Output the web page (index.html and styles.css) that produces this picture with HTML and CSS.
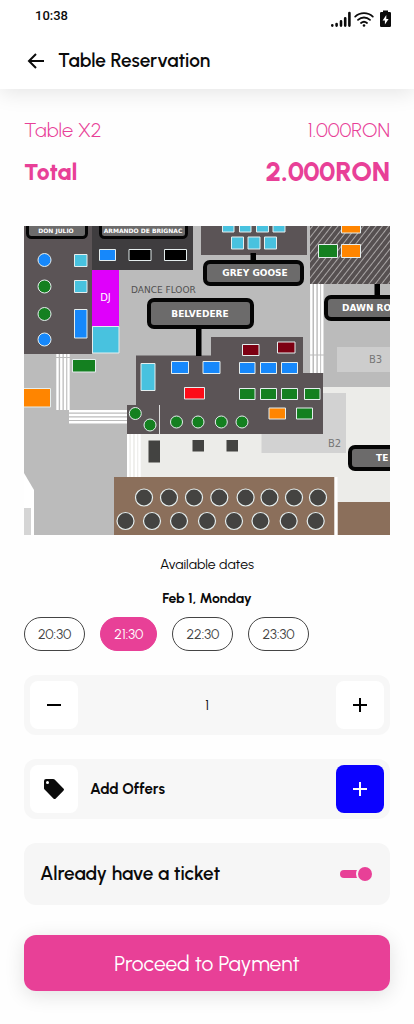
FILE: index.html
```html
<!DOCTYPE html>
<html lang="en">
<head>
<meta charset="utf-8">
<meta name="viewport" content="width=device-width, initial-scale=1">
<title>Table Reservation</title>
<link rel="stylesheet" href="styles.css">
</head>
<body>
<header class="header">
  <div class="status">
    <span class="time">10:38</span>
    <svg class="status-icons" width="62" height="18" viewBox="0 0 62 18" aria-hidden="true">
      <g stroke="#0b0b0b" stroke-width="2.6" stroke-linecap="round" fill="none">
        <path d="M2.3 15.6v-.4M6.6 15.6v-1.6M11 15.6v-4.2M15.2 15.6V8.200M19.400 15.600V3"/>
        <path stroke-width="1.8" d="M25.200 6.600c5-4.600 12.600-4.600 17.600 0M28 9.900c3.500-3.200 8.500-3.200 12 0M31 13c1.900-1.600 4.100-1.600 6 0"/>
      </g>
      <circle cx="34" cy="15.500" r="1.300" fill="#0b0b0b"/>
      <path fill="#0b0b0b" d="M53 .5h5v1.500h1.800q1.200 0 1.200 1.200v12.600q0 1.200-1.200 1.200h-8.600q-1.200 0-1.200-1.200V3.200q0-1.200 1.200-1.200H53z"/>
      <path fill="#fff" d="M56.300 5 52.600 10.500h2.300v4l3.700-5.600h-2.300z"/>
    </svg>
  </div>
  <div class="appbar">
    <button class="back" type="button" aria-label="Back">
      <svg width="18" height="18" viewBox="0 0 18 18" fill="none" stroke="#0b0b0b" stroke-width="2"><path d="M17 9H2.500M9 2 2 9l7 7"/></svg>
    </button>
    <h1 class="title">Table Reservation</h1>
  </div>
</header>

<main class="content">
  <dl class="summary">
    <div class="row"><dt>Table X2</dt><dd>1.000RON</dd></div>
    <div class="row total"><dt>Total</dt><dd>2.000RON</dd></div>
  </dl>

  <svg class="map" viewBox="24 226 366 309" role="img" aria-label="Venue floor plan">
    <defs>
      <pattern id="hatch" width="5" height="8" patternUnits="userSpaceOnUse" patternTransform="rotate(38)">
        <rect width="5" height="8" fill="#565051"/><rect width="1" height="8" fill="#aaa6a6"/>
      </pattern>
    </defs>
    <rect x="24" y="226" width="366" height="309" fill="#bbb"/>
    <path fill="#ecece9" d="M127 434H323V387H390V535H334V477H127z"/>
    <path fill="#d2d2d2" d="M261.500 393H346V453H261.500z"/>
    <path fill="#fff" d="M24 473 34 490V535H24z"/>
    <path fill="#d5d5d5" d="M24 508h7v27h-7z"/>
    <path fill="#cdcdcd" d="M337 347h53v25h-53z"/>

    <!-- stairs -->
    <g stroke="#fff" stroke-width="2.400">
      <path d="M57.500 354v56M61.300 354v56M65 354v56M68.500 354v56M69 411.200h58M69 415h58M69 418.800h58M69 422.300h58"/>
      <path d="M128.200 434v43M132 434v43M136 434v43M139.500 434v43"/>
      <path d="M311.300 284v89M315.200 284v89M319 284v89M322.300 284v89"/>
    </g>
    <path stroke="#bbb" d="M56 357.500h14M310 355h14"/>

    <!-- seating blocks -->
    <path fill="#5b5456" d="M24 226h68v128H24zM201 226h106v29H201zM136 355.500H211V337H303V373H323V434H127V405H136z"/>
    <path fill="#3f3d3f" d="M92 226h101v44H92z"/>
    <path fill="url(#hatch)" d="M310 226h80v58h-80z"/>
    <path stroke="#ddd" d="M159.500 405v29"/>
    <path fill="#8b6f5b" d="M114 477h220.500v58H114zM337.500 502H390v33h-52.500z"/>
    <path fill="#fff" d="M334.500 477h3v58h-3z"/>

    <g stroke="#e5eeee" stroke-width="1">
      <g fill="#48c2df">
        <path d="M74.500 254.500h12.500v12H74.500zM74.500 280.500h12.500v12H74.500zM92.500 326.500h26.500v26.500H92.500zM141 363.500h14v27h-14z"/>
        <path d="M222.500 220h11.500v12h-11.500zM239.500 220h11.500v12h-11.500zM256.500 220h12v12h-12zM273 220h12v12h-12zM231.500 237h12v12h-12zM248 237h12v12h-12zM264.500 237h12v12h-12z"/>
      </g>
      <g fill="#1688fb">
        <path d="M74.500 309.500h12.500v28.500H74.500zM99.500 249.500h16v11h-16zM171.500 361.500h17v12h-17zM203 361.500h17v12h-17zM239.500 362.500h15.500v11h-15.500zM260.500 362.500h16v11h-16zM281.500 362.500h16v11h-16z"/>
        <circle cx="44.500" cy="260" r="6.500"/><circle cx="44.500" cy="339.500" r="6.500"/>
      </g>
      <path fill="#000" d="M129 249.500h22v11h-22zM164.500 249.500h22v11h-22z"/>
      <g fill="#148020">
        <path d="M72.500 359.500h23v12.500h-23zM318.500 244.500h19v13h-19zM239.500 388.500h15.500v11h-15.500zM260.500 388.500h16v11h-16zM281.500 388.500h16v11h-16zM304.500 388.500h15.500v11h-15.500zM296.500 408h16v11h-16z"/>
        <circle cx="44.500" cy="286.500" r="6.500"/><circle cx="44.500" cy="314" r="6.500"/>
        <circle cx="135.300" cy="413.500" r="6"/><circle cx="150" cy="425" r="6"/><circle cx="176.500" cy="422" r="6"/><circle cx="198" cy="422" r="6"/><circle cx="221.300" cy="422" r="6"/><circle cx="242" cy="422" r="6"/>
      </g>
      <path fill="#ff8500" d="M20 388.500h30.500v18.500H20zM341.500 220h19v13h-19zM341.500 244.500h19v13h-19zM269 408h16.500v11h-16.500z"/>
      <path fill="#7d0012" d="M242.500 344.500h16.500v11h-16.500zM277.500 342h17.500v11h-17.500z"/>
      <path fill="#fd0c18" d="M184.500 387.500h20v11.500h-20z"/>
      <g fill="#444341" stroke-width="1.200">
        <circle cx="144" cy="497.500" r="8.500"/><circle cx="169" cy="497.500" r="8.500"/><circle cx="194" cy="497.500" r="8.500"/><circle cx="219.300" cy="497.500" r="8.500"/><circle cx="245.600" cy="497.500" r="8.500"/><circle cx="269.500" cy="497.500" r="8.500"/><circle cx="294" cy="497.500" r="8.500"/><circle cx="318" cy="497.500" r="8.500"/>
        <circle cx="125.500" cy="521" r="8.500"/><circle cx="152" cy="521" r="8.500"/><circle cx="179" cy="521" r="8.500"/><circle cx="207" cy="521" r="8.500"/><circle cx="234" cy="521" r="8.500"/><circle cx="260.500" cy="521" r="8.500"/><circle cx="288.700" cy="521" r="8.500"/><circle cx="315.700" cy="521" r="8.500"/>
      </g>
    </g>
    <path fill="#434341" d="M148.500 440.500h11.500v22h-11.500zM192.500 440h11.500v11.500h-11.500zM226.500 440h11.500v11.500h-11.500z"/>
    <path fill="#df00fb" d="M92 270h27v56H92z"/>

    <!-- zone signs -->
    <path fill="#000" d="M250.500 253h5.500v9h-5.500zM196 326h5.500v30H196zM374.500 284h5.500v13h-5.500z"/>
    <g fill="#6c6b6b" stroke="#050505" stroke-width="4">
      <rect x="205" y="262" width="97" height="22" rx="5"/>
      <rect x="149" y="300" width="103" height="27" rx="5"/>
      <rect x="326" y="297" width="90" height="22" rx="5"/>
      <rect x="350" y="447" width="90" height="22" rx="5"/>
      <rect x="27.500" y="215" width="59" height="22.500" rx="4" stroke-width="3"/>
      <rect x="100.500" y="215" width="86" height="22.500" rx="4" stroke-width="3"/>
    </g>
    <g class="sign">
      <text class="small" x="56" y="233" text-anchor="middle">DON JULIO</text>
      <text class="small" x="143" y="233" text-anchor="middle">ARMANDO DE BRIGNAC</text>
      <text x="255" y="276" text-anchor="middle">GREY GOOSE</text>
      <text x="200" y="317" text-anchor="middle">BELVEDERE</text>
      <text x="342" y="311">DAWN RO</text>
      <text x="376" y="461">TE</text>
    </g>
    <g class="zone">
      <text class="dj" x="105.500" y="301" text-anchor="middle">DJ</text>
      <text class="floor" x="131" y="293">DANCE FLOOR</text>
      <text x="369" y="363">B3</text>
      <text x="328" y="447">B2</text>
    </g>
  </svg>

  <section class="dates">
    <h2 class="dates-title">Available dates</h2>
    <p class="day">Feb 1, Monday</p>
    <div class="slots">
      <button class="slot" type="button">20:30</button>
      <button class="slot selected" type="button" aria-pressed="true">21:30</button>
      <button class="slot" type="button">22:30</button>
      <button class="slot" type="button">23:30</button>
    </div>
  </section>

  <div class="panel">
    <button class="square" type="button" aria-label="Fewer">
      <svg width="14" height="14" viewBox="0 0 14 14"><path fill="#000" d="M0 6h14v2H0z"/></svg>
    </button>
    <output class="count">1</output>
    <button class="square" type="button" aria-label="More">
      <svg width="14" height="14" viewBox="0 0 14 14"><path fill="#000" d="M0 6h6V0h2v6h6v2H8v6H6V8H0z"/></svg>
    </button>
  </div>

  <div class="panel">
    <span class="square">
      <svg width="20" height="20" viewBox="0 0 20 20" aria-hidden="true"><path fill="#0b0b0b" fill-rule="evenodd" d="M2 0h7.200q.8 0 1.400.6l8.800 8.800q1.200 1.200 0 2.400l-7.600 7.600q-1.200 1.200-2.400 0L.6 10.600Q0 10 0 9.200V2Q0 0 2 0zM3.500 2A1.500 1.500 0 1 0 3.500 5 1.500 1.500 0 1 0 3.500 2z"/></svg>
    </span>
    <span class="offers">Add Offers</span>
    <button class="square blue" type="button" aria-label="Add offer">
      <svg width="14" height="14" viewBox="0 0 14 14"><path fill="#fff" d="M0 6h6V0h2v6h6v2H8v6H6V8H0z"/></svg>
    </button>
  </div>

  <label class="ticket" for="ticket">
    <span>Already have a ticket</span>
    <input class="toggle" id="ticket" type="checkbox" role="switch" checked>
  </label>

  <button class="pay" type="button">Proceed to Payment</button>
</main>
</body>
</html>
```
FILE: styles.css
```css
* { box-sizing: border-box; }

body {
  margin: 0;
  background: #fefefe;
  color: #0b0b0b;
  font-family: Urbanist, Lato, "Liberation Sans", sans-serif;
}

h1, h2, p, dl, dd { margin: 0; }

button {
  border: 0;
  padding: 0;
  font: inherit;
  color: inherit;
  cursor: pointer;
}

.header {
  background: #fff;
  padding: 8px 22px 12px 24px;
  box-shadow: 0 4px 20px rgba(0, 0, 0, 0.1);
}

.status {
  display: flex;
  justify-content: space-between;
  height: 25px;
}

.time {
  padding-left: 11px;
  font: 500 13px/16px Roboto, sans-serif;
}

.status-icons { margin-top: 2px; }

.appbar {
  display: flex;
  align-items: center;
  gap: 10px;
  height: 44px;
  padding-top: 12px;
}

.back {
  display: flex;
  align-items: center;
  justify-content: center;
  width: 24px;
  height: 24px;
  background: none;
}

.title {
  font-size: 19px;
  font-weight: 600;
  line-height: 24px;
}

.content {
  display: flex;
  flex-direction: column;
  gap: 24px;
  padding: 27px 24px 32px;
}

.summary {
  display: flex;
  flex-direction: column;
  gap: 14px;
  color: #e84097;
}

.row {
  display: flex;
  justify-content: space-between;
  align-items: center;
  font-size: 20px;
  font-weight: 300;
  line-height: 28px;
}

.total {
  font-size: 23px;
  font-weight: 800;
}

.total dd { font-size: 27px; }

.map {
  display: block;
  width: 100%;
  height: auto;
  margin-top: 16px;
}

.sign { font: bold 9px "DejaVu Sans", sans-serif; fill: #fff; }
.sign .small { font-size: 6px; }
.zone { font: 10px "DejaVu Sans", sans-serif; fill: #777; }
.zone .floor { font-size: 9px; fill: #505050; }
.zone .dj { fill: #fff; }

.dates {
  text-align: center;
  margin-top: -3px;
}

.dates-title {
  font-size: 14px;
  font-weight: 400;
  line-height: 18px;
}

.day {
  margin: 16px 0 9px;
  font-size: 14px;
  font-weight: 700;
  line-height: 18px;
}

.slots {
  display: flex;
  gap: 15px;
}

.slot {
  height: 34px;
  padding: 0 13px;
  border: 1px solid #444;
  border-radius: 17px;
  background: #fff;
  color: #444;
  font-size: 14px;
}

.slot.selected {
  border-color: #e84097;
  background: #e84097;
  color: #fff;
}

.panel {
  display: flex;
  align-items: center;
  padding: 6px;
  border-radius: 12px;
  background: #f7f7f7;
}

.square {
  display: flex;
  align-items: center;
  justify-content: center;
  width: 48px;
  height: 48px;
  border-radius: 8px;
  background: #fff;
}

.square.blue { background: #0a00ff; }

.count {
  flex: 1;
  text-align: center;
  font-size: 14px;
}

.offers {
  flex: 1;
  padding-left: 12px;
  font-size: 15px;
  font-weight: 700;
}

.ticket {
  display: flex;
  align-items: center;
  justify-content: space-between;
  padding: 19px 18px 19px 16px;
  border-radius: 12px;
  background: #f6f6f6;
  font-size: 19px;
  font-weight: 600;
  line-height: 24px;
}

.toggle {
  appearance: none;
  display: flex;
  align-items: center;
  justify-content: flex-end;
  width: 32px;
  height: 8px;
  margin: 0;
  border-radius: 4px;
  background: #e84097;
}

.toggle::before {
  content: "";
  flex: none;
  width: 14px;
  height: 14px;
  border-radius: 50%;
  background: #e84097;
  box-shadow: 0 0 0 2px #f6f6f6;
}

.pay {
  height: 56px;
  margin-top: 6px;
  border-radius: 12px;
  background: #e84097;
  color: #fff;
  font-size: 21px;
  box-shadow: 0 4px 20px rgba(0, 0, 0, 0.12);
}
```
